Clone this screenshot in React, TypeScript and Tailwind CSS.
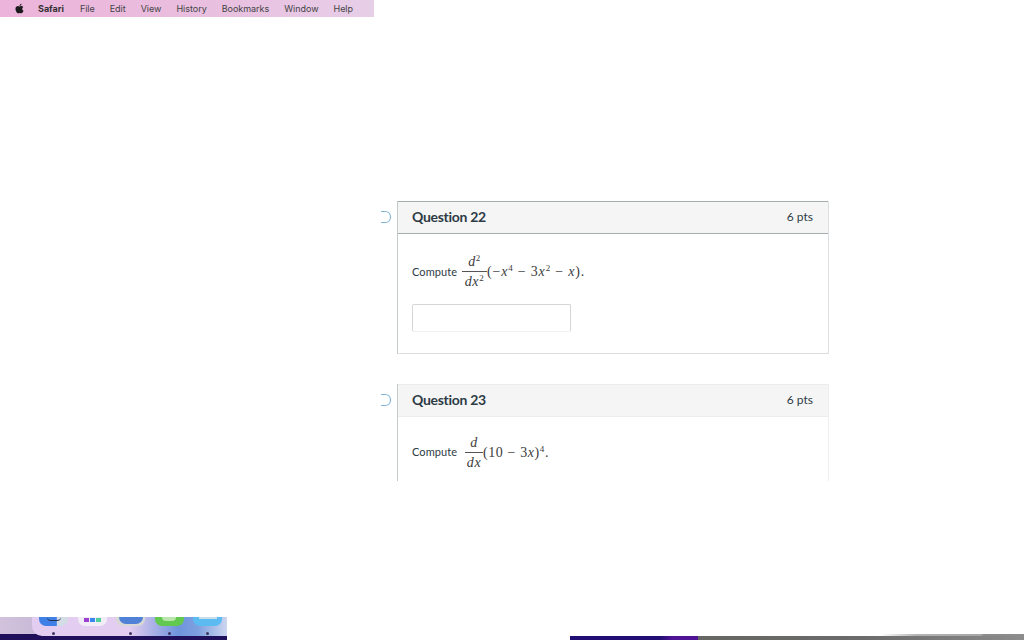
import React from "react";
import { FaApple } from "react-icons/fa";

const menu = ["File", "Edit", "View", "History", "Bookmarks", "Window", "Help"];

function Spinner() {
  return (
    <svg width="12" height="14" viewBox="0 0 12 14" fill="none" className="mt-[9px] shrink-0">
      <path d="M1 1.5 H5 C8.5 1.5 10.5 4 10.5 7 C10.5 10 8.5 12.5 5 12.5 H1" stroke="#7fb4d3" strokeWidth="1.1" />
    </svg>
  );
}

function Frac({ top, bottom, w }: { top: React.ReactNode; bottom: React.ReactNode; w: string }) {
  return (
    <span className={`inline-flex flex-col items-center font-['Liberation_Serif',serif] italic text-[14px] leading-[17px] text-[#3c3c3c] tracking-[0.6px] ${w}`}>
      <span className="pb-[1px]">{top}</span>
      <span className="w-full text-center border-t border-[#555] pt-[1px]">{bottom}</span>
    </span>
  );
}

function Sup({ children }: { children: React.ReactNode }) {
  return <sup className="text-[9px] not-italic leading-none top-[-5px] relative align-baseline">{children}</sup>;
}

function Header({ title, line }: { title: string; line: string }) {
  return (
    <div className={`h-[33px] flex items-center justify-between pl-[14px] pr-[15px] pb-[1px] bg-[#f5f5f5] border-t border-b ${line}`}>
      <span className="mb-[2px] text-[14px] font-bold text-[#2d3b45] tracking-[-0.3px]">{title}</span>
      <span className="text-[12px] text-[#2d3b45]">6 pts</span>
    </div>
  );
}

const dockIcons = [
  <div className="w-[29px] h-[9px] rounded-b-[7px] bg-[linear-gradient(90deg,#3f80e6_0%,#3f80e6_60%,#d4dde6_62%,#d4dde6_100%)] flex justify-center overflow-hidden">
    <div className="w-[14px] h-[4px] rounded-b-full border-b border-[#26324a]" />
  </div>,
  <div className="w-[29px] h-[9px] rounded-b-[7px] bg-[#f1ecf5] flex justify-center gap-[1px] pt-[1px]">
    <div className="w-[5px] h-[4px] bg-[#9c3fd0]" />
    <div className="w-[5px] h-[4px] bg-[#3b86ea]" />
    <div className="w-[5px] h-[4px] bg-[#4fcf9c]" />
  </div>,
  <div className="w-[29px] h-[9px] rounded-b-[7px] bg-[#d8d8d6] flex justify-center overflow-hidden">
    <div className="w-[24px] h-[7px] rounded-b-full bg-[#4f82d6]" />
  </div>,
  <div className="w-[29px] h-[9px] rounded-b-[7px] bg-[#62c84f] flex justify-center overflow-hidden">
    <div className="w-[14px] h-[4px] rounded-b-full bg-[#b9e6ab]" />
  </div>,
  <div className="w-[29px] h-[9px] rounded-b-[7px] bg-[#5cbcf2] flex justify-center overflow-hidden">
    <div className="w-[18px] h-[2px] bg-[#c8dfe8]" />
  </div>,
];
const dotOn = [true, false, true, true, true];

export default function App() {
  return (
    <div className="w-[1024px] h-[640px] bg-white overflow-hidden flex flex-col font-['Lato',sans-serif]">
      <div className="w-[374px] h-[17px] shrink-0 flex items-center pl-[14px] bg-[linear-gradient(90deg,#ecb4da_0%,#e9c0e0_60%,#e7cfe8_100%)] text-[9px] text-[#444] font-['Inter',sans-serif]">
        <FaApple className="w-[11px] h-[11px] text-[#1a1a1a] mr-[13px]" />
        <span className="font-bold text-[#333] mr-[16px]">Safari</span>
        <div className="flex gap-[15px] tracking-[-0.03px]">
          {menu.map((m) => (
            <span key={m}>{m}</span>
          ))}
        </div>
      </div>

      <div className="h-[600px] shrink-0 pt-[184px] pl-[380px] flex flex-col gap-[30px]">
        <div className="flex gap-[5px]">
          <Spinner />
          <div className="w-[432px] h-[153px] border-x border-b border-[#dcdfe1] border-l-[#c4c9cc]">
            <Header title="Question 22" line="border-[#a8adb0]" />
            <div className="pl-[14px] pt-[19px]">
              <div className="flex items-center text-[11px] tracking-[0.1px] text-[#2d3b45] h-[37px]">
                <span className="w-[50px] mt-[2px]">Compute</span>
                <span className="flex items-center">
                  <Frac w="w-[25px]" top={<>d<Sup>2</Sup></>} bottom={<>dx<Sup>2</Sup></>} />
                  <span className="font-['Liberation_Serif',serif] text-[14px] text-[#3c3c3c] tracking-[0.8px]">
                    (−<i>x</i><Sup>4</Sup> − 3<i>x</i><Sup>2</Sup> − <i>x</i>).
                  </span>
                </span>
              </div>
              <div className="mt-[14px] w-[159px] h-[28px] rounded-[2px] border border-[#d3d5d7] border-b-[#f0f0f0]" />
            </div>
          </div>
        </div>

        <div className="flex gap-[5px]">
          <Spinner />
          <div className="w-[432px] h-[97px] border-x border-[#eceef0] border-l-[#c4c9cc]">
            <Header title="Question 23" line="border-[#ececec]" />
            <div className="pl-[14px] pt-[17px]">
              <div className="flex items-center text-[11px] tracking-[0.1px] text-[#2d3b45] h-[37px]">
                <span className="w-[53px]">Compute</span>
                <Frac w="w-[18px]" top="d" bottom="dx" />
                <span className="font-['Liberation_Serif',serif] text-[14px] text-[#3c3c3c] tracking-[0.6px]">
                  (10 − 3<i>x</i>)<Sup>4</Sup>.
                </span>
              </div>
            </div>
          </div>
        </div>
      </div>

      <div className="flex justify-between flex-1 min-h-0">
        <div className="w-[227px] h-[23px] flex flex-col">
          <div className="h-[17px] bg-[linear-gradient(90deg,#d2c2dc_0%,#c9bad8_15%,#d8c8e8_100%)]">
            <div className="ml-[32px] h-[19px] relative rounded-bl-[10px] pl-[7px] flex gap-[9.5px] bg-[linear-gradient(90deg,#e3cdf0_0%,#e3cdf0_50%,#6f94dc_75%,#7ea0e0_85%,#cdd6ef_100%)]">
              {dockIcons.map((icon, i) => (
                <div key={i} className="flex flex-col items-center">
                  {icon}
                  <div className={`w-[3px] h-[3px] rounded-full mt-[6px] ${dotOn[i] ? "bg-[#3c3560]" : "bg-transparent"}`} />
                </div>
              ))}
            </div>
          </div>
          <div className="h-[6px] bg-[#20105c]" />
        </div>

        <div className="w-[454px] h-[23px] flex flex-col justify-end">
          <div className="h-[2px] flex justify-end">
            <div className="w-[144px] h-[2px] bg-[linear-gradient(90deg,#ffffff_0%,#b4b4b4_25%,#a9a5a9_70%,#8c8c8c_72%,#8c8c8c_100%)]" />
          </div>
          <div className="h-[4px] flex">
            <div className="w-[128px] bg-[linear-gradient(90deg,#200e74_0%,#200e74_70%,#4f1396_80%,#4f1396_100%)]" />
            <div className="flex-1 bg-[linear-gradient(90deg,#666664_0%,#6b6b6b_50%,#8c8c8c_100%)]" />
          </div>
        </div>
      </div>
    </div>
  );
}
